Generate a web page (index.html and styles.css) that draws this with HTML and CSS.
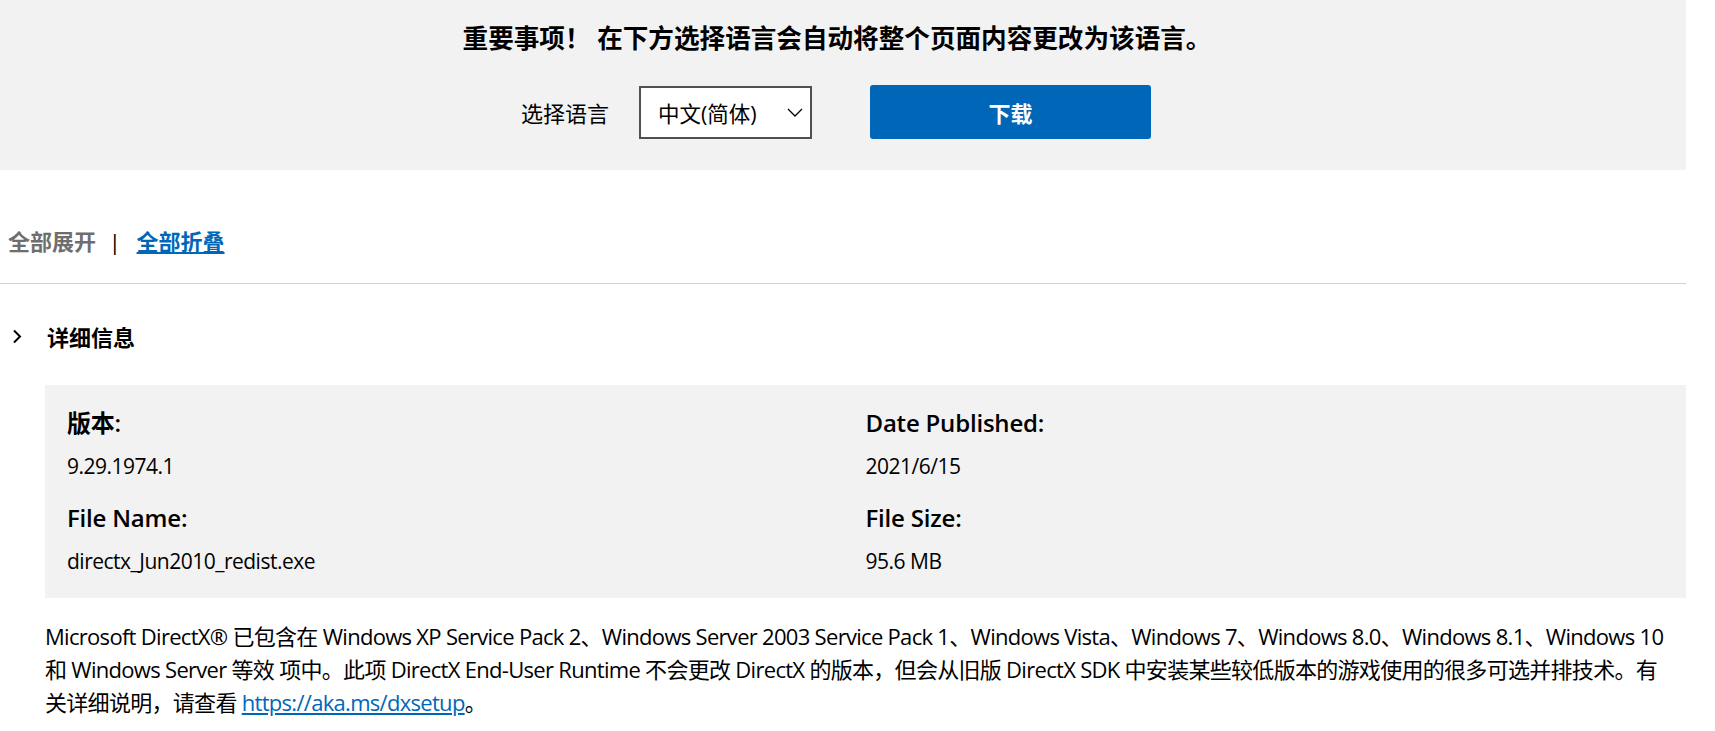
FILE: index.html
```html
<!DOCTYPE html>
<html lang="zh-CN">
<head>
  <meta charset="UTF-8">
  <meta name="viewport" content="width=device-width, initial-scale=1.0">
  <title>DirectX End-User Runtime 下载</title>
  <link rel="stylesheet" href="styles.css">
</head>
<body>
  <div class="page">
    <header class="lang-bar">
      <h2 class="notice">重要事项！ 在下方选择语言会自动将整个页面内容更改为该语言。</h2>
      <div class="lang-row">
        <label class="lang-label" for="lang">选择语言</label>
        <div class="lang-select" id="lang">
          <span>中文(简体)</span>
          <svg width="16" height="9" viewBox="0 0 16 9"><polyline points="1,1 8,8 15,1" fill="none" stroke="#000" stroke-width="1.3"/></svg>
        </div>
        <a class="btn-download" href="#">下载</a>
      </div>
    </header>

    <div class="toggles">
      <span class="expand">全部展开</span>
      <span class="sep">|</span>
      <a class="collapse" href="#">全部折叠</a>
    </div>

    <section class="details">
      <div class="details-head">
        <svg width="10" height="15" viewBox="0 0 10 15"><polyline points="2,1.5 8,7.5 2,13.5" fill="none" stroke="#000" stroke-width="2"/></svg>
        <span>详细信息</span>
      </div>

      <div class="details-box">
        <div class="field">
          <div class="field-label">版本:</div>
          <div class="field-value">9.29.1974.1</div>
        </div>
        <div class="field">
          <div class="field-label">Date Published:</div>
          <div class="field-value">2021/6/15</div>
        </div>
        <div class="field">
          <div class="field-label">File Name:</div>
          <div class="field-value">directx_Jun2010_redist.exe</div>
        </div>
        <div class="field">
          <div class="field-label">File Size:</div>
          <div class="field-value">95.6 MB</div>
        </div>
      </div>

      <p class="desc">Microsoft DirectX® 已包含在 Windows XP Service Pack 2、Windows Server 2003 Service Pack 1、Windows Vista、Windows 7、Windows 8.0、Windows 8.1、Windows 10 和 Windows Server 等效 项中。此项 DirectX End-User Runtime 不会更改 DirectX 的版本，但会从旧版 DirectX SDK 中安装某些较低版本的游戏使用的很多可选并排技术。有关详细说明，请查看 <a href="#">https://aka.ms/dxsetup</a>。</p>
    </section>
  </div>
</body>
</html>
```

FILE: styles.css
```css
body { margin: 0; font-family: "Open Sans", "Noto Sans CJK SC", sans-serif; color: #000; background: #fff; }
.page { margin-right: 29px; }

/* 语言选择栏 */
.lang-bar { background: #f2f2f2; padding: 21px 0 31px; text-align: center; }
.notice { margin: 0; padding-right: 12px; font-size: 25.6px; line-height: 36px; font-weight: 700; }
.lang-row { display: flex; justify-content: center; align-items: center; margin-top: 28px; padding-right: 14px; }
.lang-label { font-size: 22px; margin-right: 30px; }
.lang-select { width: 173px; height: 53px; box-sizing: border-box; border: 2px solid #505050; background: #fff; display: flex; align-items: center; justify-content: space-between; padding: 0 7px 0 17px; font-size: 21.5px; }
.btn-download { margin-left: 58px; width: 281px; height: 54px; background: #0067b8; color: #fff; border-radius: 3px; font-size: 22px; font-weight: 700; display: flex; align-items: center; justify-content: center; text-decoration: none; }

.toggles { padding: 56px 0 27px 8px; border-bottom: 1px solid #d2d2d2; font-size: 22px; line-height: 30px; font-weight: 700; }
.toggles .expand { color: #6e6e6e; }
.toggles .sep { font-weight: 400; color: #000; margin: 0 10px 0 7px; }
.toggles .collapse { color: #0067b8; text-decoration: underline; }

.details-head { display: flex; align-items: center; margin-top: 37px; margin-bottom: 3px; height: 30px; font-size: 22px; font-weight: 700; }
.details-head svg { margin-left: 12px; margin-right: 25px; }

.details-box { margin: 34px 0 0 45px; background: #f2f2f2; padding: 23px 22px 22px; display: grid; grid-template-columns: 1fr 1fr; row-gap: 22px; }
.field-label { font-size: 24px; font-weight: 600; line-height: 30px; letter-spacing: -0.2px; }
.field-value { margin-top: 13px; font-size: 21px; line-height: 30px; letter-spacing: -0.5px; }

.desc { margin: 22px 11px 0 45px; font-size: 22px; line-height: 33px; letter-spacing: -0.7px; }
.desc a { color: #0067b8; text-decoration: underline; }
```
